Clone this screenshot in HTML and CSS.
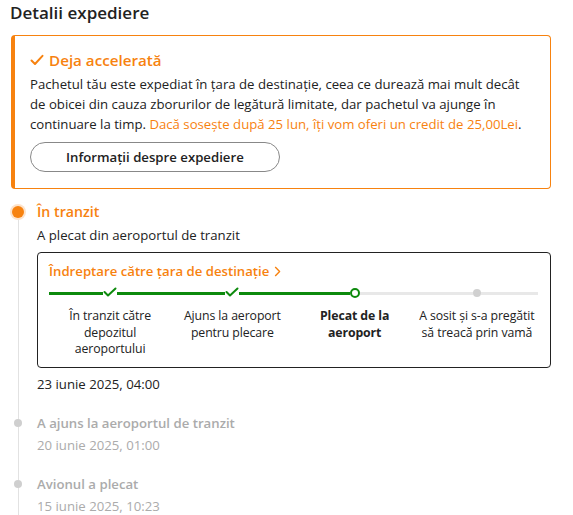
FILE: index.html
```html
<!DOCTYPE html>
<html lang="ro">
<head>
<meta charset="utf-8">
<link rel="stylesheet" href="styles.css">
</head>
<body>
<div class="page">
  <h1 class="title">Detalii expediere</h1>

  <section class="notice">
    <h2 class="notice-title">
      <svg class="notice-check" width="14" height="12" viewBox="0 0 14 12"><path d="M1.5 6.5 L5 10 L12.5 1.8" fill="none" stroke="currentColor" stroke-width="2" stroke-linecap="round" stroke-linejoin="round"/></svg>
      Deja accelerată
    </h2>
    <p class="notice-text">Pachetul tău este expediat în țara de destinație, ceea ce durează mai mult decât de obicei din cauza zborurilor de legătură limitate, dar pachetul va ajunge în continuare la timp. <span class="accent">Dacă sosește după 25 lun, îți vom oferi un credit de 25,00Lei</span>.</p>
    <button class="pill-btn">Informații despre expediere</button>
  </section>

  <div class="timeline">
    <div class="tl-item tl-first">
      <div class="rail"><span class="dot dot-active"></span></div>
      <div class="tl-body">
        <div class="tl-title active">În tranzit</div>
        <div class="tl-sub">A plecat din aeroportul de tranzit</div>
        <div class="route">
          <div class="route-head">Îndreptare către țara de destinație
            <svg width="7" height="11" viewBox="0 0 7 11"><path d="M1.2 1 L5.6 5.5 L1.2 10" fill="none" stroke="currentColor" stroke-width="1.4" stroke-linejoin="round"/></svg>
          </div>
          <div class="steps">
            <div class="step">
              <div class="track"><span class="seg done"></span><svg class="mk-check" width="14" height="10" viewBox="0 0 14 10"><path d="M1.5 5 L5 8.5 L12.5 1.5" fill="none" stroke="currentColor" stroke-width="2" stroke-linecap="round" stroke-linejoin="round"/></svg><span class="seg done"></span></div>
              <div class="step-label">În tranzit către depozitul aeroportului</div>
            </div>
            <div class="step">
              <div class="track"><span class="seg done"></span><svg class="mk-check" width="14" height="10" viewBox="0 0 14 10"><path d="M1.5 5 L5 8.5 L12.5 1.5" fill="none" stroke="currentColor" stroke-width="2" stroke-linecap="round" stroke-linejoin="round"/></svg><span class="seg done"></span></div>
              <div class="step-label">Ajuns la aeroport pentru plecare</div>
            </div>
            <div class="step">
              <div class="track"><span class="seg done"></span><span class="mk-ring"></span><span class="seg"></span></div>
              <div class="step-label current">Plecat de la aeroport</div>
            </div>
            <div class="step">
              <div class="track"><span class="seg"></span><span class="mk-dot"></span><span class="seg"></span></div>
              <div class="step-label">A sosit și s-a pregătit să treacă prin vamă</div>
            </div>
          </div>
        </div>
        <div class="tl-date">23 iunie 2025, 04:00</div>
      </div>
    </div>

    <div class="tl-item">
      <div class="rail"><span class="dot"></span></div>
      <div class="tl-body">
        <div class="tl-title">A ajuns la aeroportul de tranzit</div>
        <div class="tl-date muted">20 iunie 2025, 01:00</div>
      </div>
    </div>

    <div class="tl-item">
      <div class="rail"><span class="dot"></span></div>
      <div class="tl-body">
        <div class="tl-title">Avionul a plecat</div>
        <div class="tl-date muted">15 iunie 2025, 10:23</div>
      </div>
    </div>
  </div>
</div>
</body>
</html>
```

FILE: styles.css
```css
* { box-sizing: border-box; }
html, body { margin: 0; padding: 0; background: #fff; }
body {
  font-family: "Open Sans", "Noto Sans", sans-serif;
  color: #222;
  font-size: 13.2px;
}
.page {
  width: 551px;
  padding-left: 11px;
  overflow: hidden;
  height: 515px;
}
.title {
  margin: 0 0 9px -1px;
  font-size: 17px;
  line-height: 26px;
  font-weight: 600;
  color: #222;
}
.notice {
  border: 1px solid #f7820f;
  border-left: 4px solid #f7820f;
  border-radius: 4px;
  padding: 13px 15px 16px 15px;
}
.notice-title {
  margin: 0;
  font-size: 15.2px;
  line-height: 22px;
  font-weight: 600;
  color: #f7820f;
  display: flex;
  align-items: center;
  gap: 5px;
}
.notice-check { color: #f7820f; }
.notice-text {
  margin: 3px 0 8px;
  line-height: 20px;
  font-size: 13.2px;
}
.accent { color: #f7820f; }
.pill-btn {
  font-family: inherit;
  font-size: 13.2px;
  font-weight: 600;
  color: #222;
  background: #fff;
  border: 1px solid #888;
  border-radius: 15px;
  height: 30px;
  padding: 0 35px;
  display: block;
}
.timeline { margin-top: 12px; }
.tl-item {
  display: grid;
  grid-template-columns: 14px 1fr;
  column-gap: 12px;
}
.rail {
  display: flex;
  justify-content: center;
  background: linear-gradient(#e2e2e2, #e2e2e2) no-repeat center top / 1px 100%;
}
.tl-first .rail { background-position: center 16px; }
.dot {
  width: 8px;
  height: 8px;
  margin-top: 7px;
  border-radius: 50%;
  background: #cfcfcf;
}
.dot-active {
  width: 12px;
  height: 12px;
  margin-top: 5px;
  background: #f7820f;
  box-shadow: 0 0 0 2px #fde3cb;
}
.tl-body { padding-bottom: 18px; }
.tl-title {
  font-size: 13.2px;
  line-height: 22px;
  font-weight: 600;
  color: #ababab;
}
.tl-title.active {
  font-size: 14.2px;
  color: #f7820f;
}
.tl-sub {
  margin-top: 2px;
  line-height: 20px;
}
.route {
  margin-top: 7px;
  border: 1px solid #222;
  border-radius: 4px;
  padding: 8px 12px 9px 11px;
}
.route-head {
  color: #f7820f;
  font-weight: 600;
  line-height: 20px;
  display: flex;
  align-items: center;
  gap: 5px;
}
.steps {
  display: grid;
  grid-template-columns: repeat(4, 1fr);
  margin-top: 5px;
}
.track {
  display: flex;
  align-items: center;
  height: 14px;
}
.seg {
  flex: 1;
  height: 3px;
  background: #e8e8e8;
}
.seg.done { background: #0d8a0d; }
.mk-check { color: #0d8a0d; flex: none; margin: 0 0 2px; }
.mk-ring {
  flex: none;
  width: 10px;
  height: 10px;
  border: 2px solid #0d8a0d;
  border-radius: 50%;
  background: #fff;
}
.mk-dot {
  flex: none;
  width: 8px;
  height: 8px;
  border-radius: 50%;
  background: #d0d0d0;
}
.step-label {
  margin-top: 8px;
  text-align: center;
  font-size: 12.3px;
  line-height: 16.5px;
  padding: 0 2px;
  letter-spacing: -0.1px;
}
.step-label.current { font-weight: 700; }
.tl-date {
  margin-top: 6px;
  line-height: 20px;
}
.tl-date.muted {
  margin-top: 1px;
  color: #ababab;
}
```
